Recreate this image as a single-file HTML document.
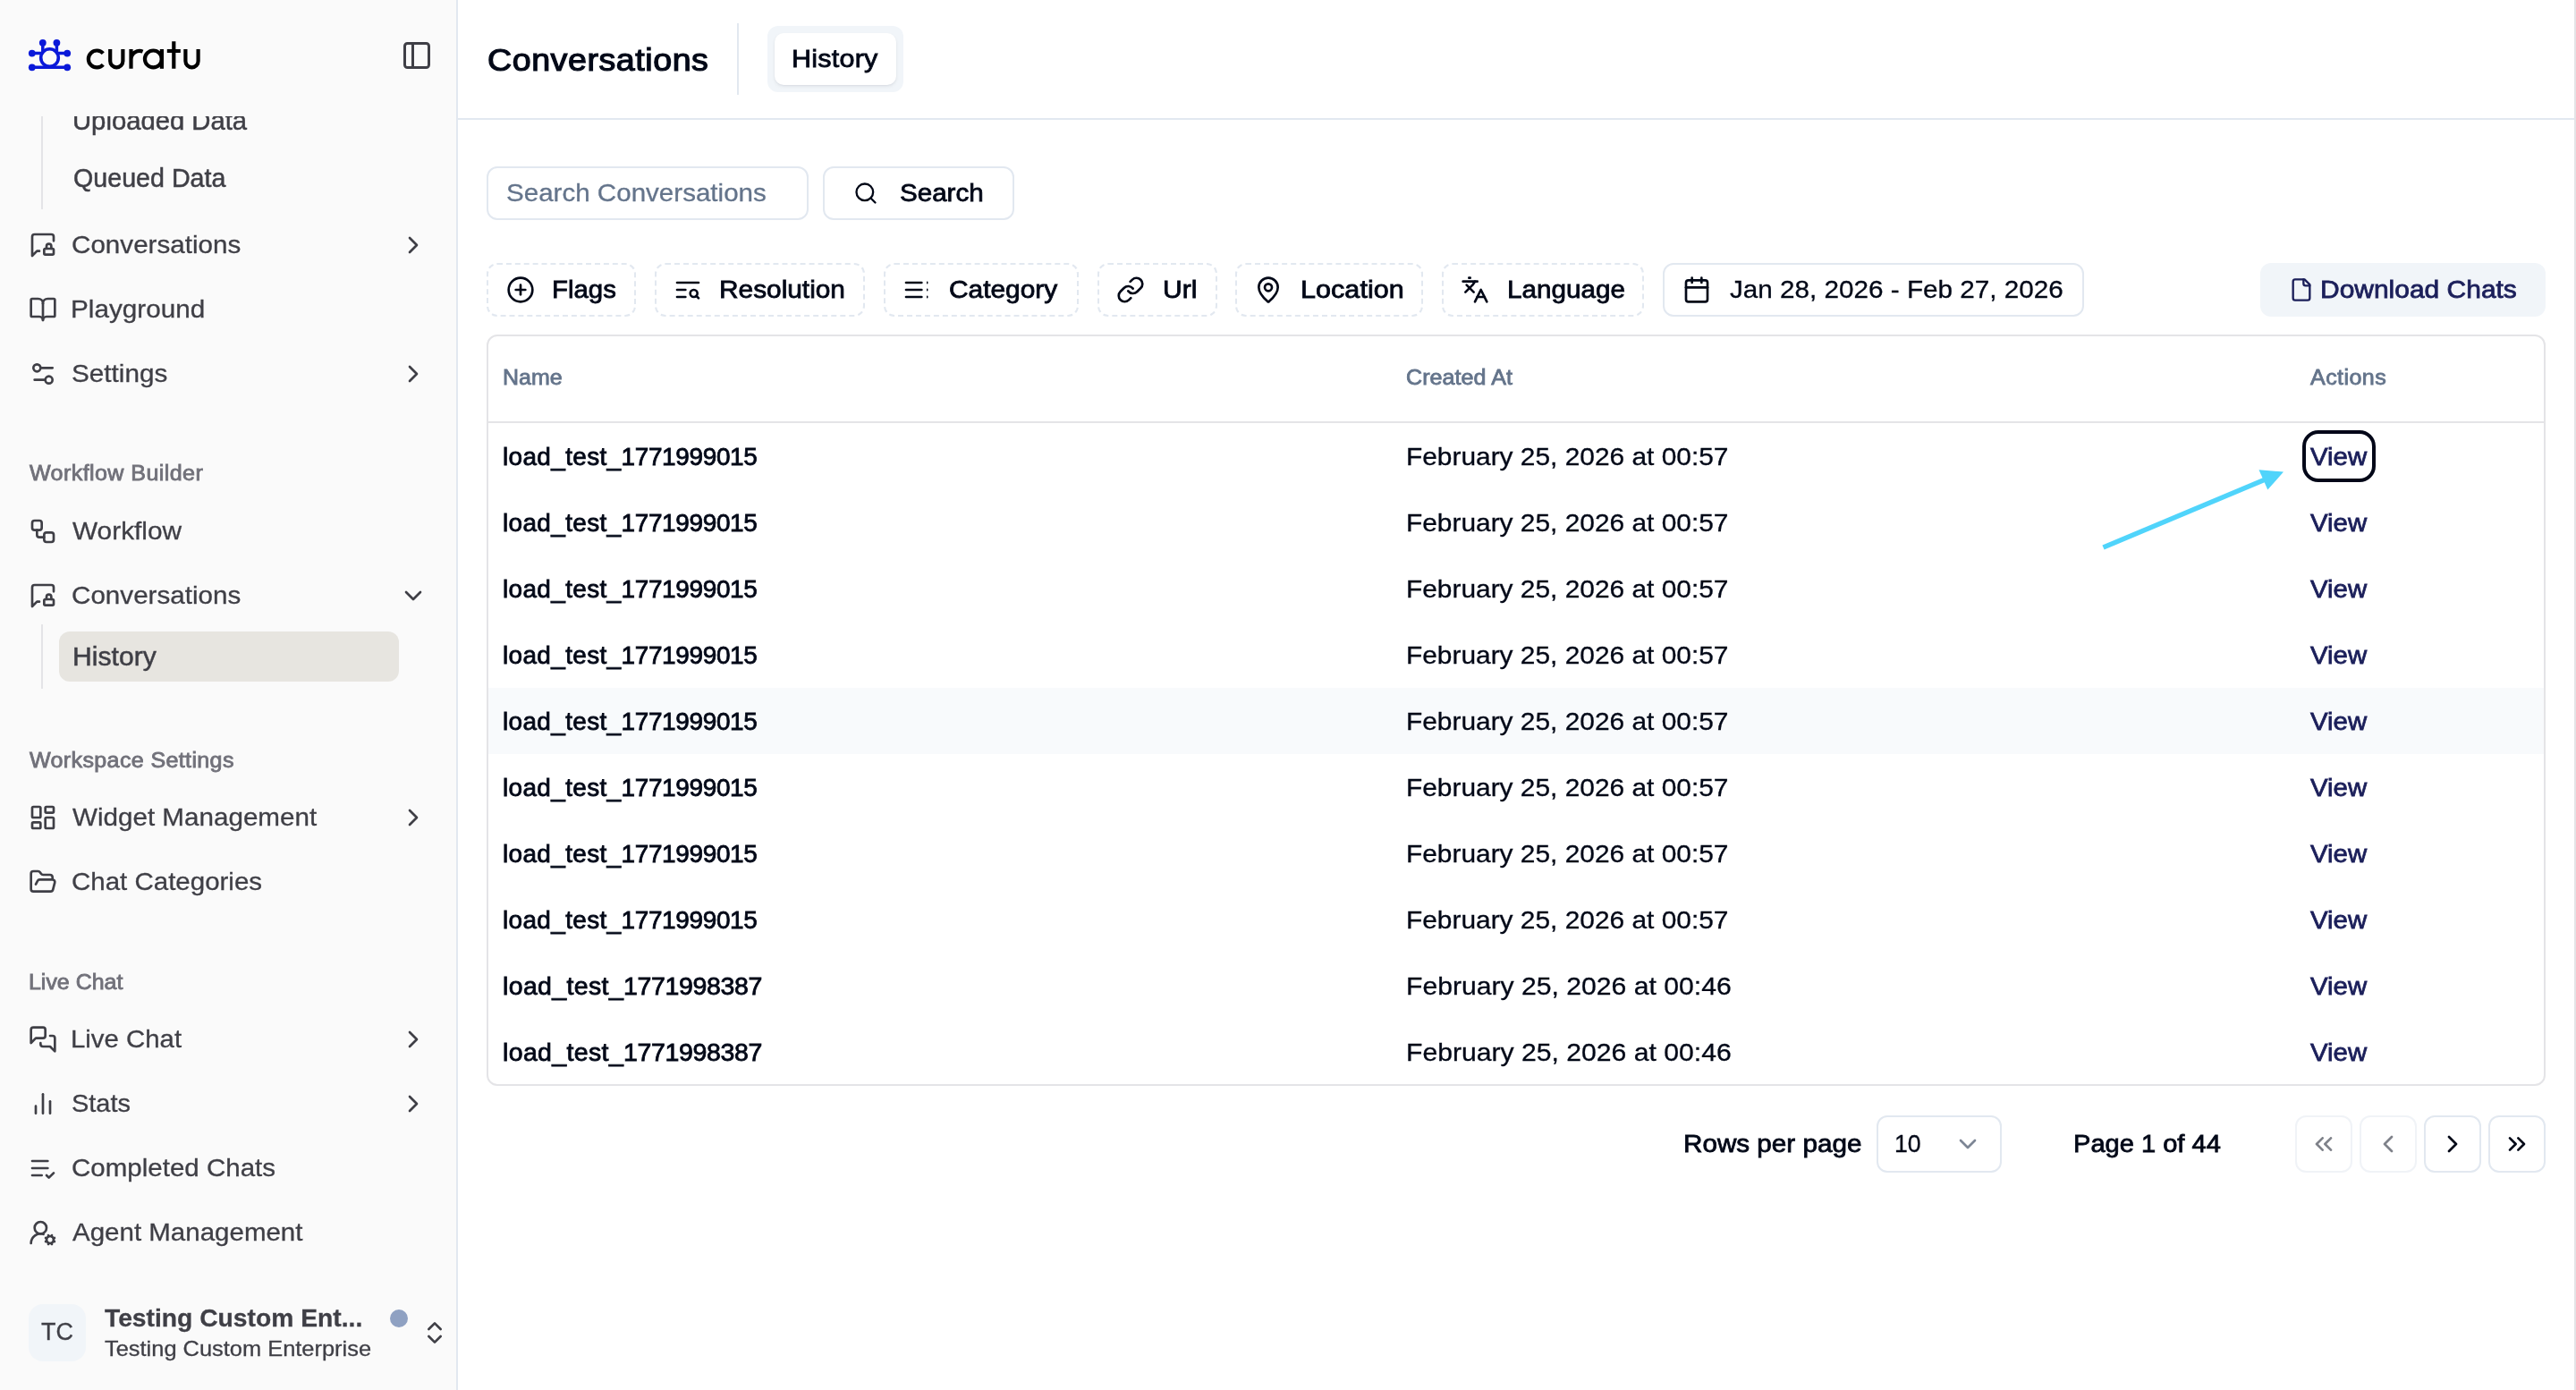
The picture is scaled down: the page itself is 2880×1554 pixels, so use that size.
<!DOCTYPE html>
<html lang="en">
<head>
<meta charset="utf-8">
<title>Conversations - History</title>
<style>
*{box-sizing:border-box;margin:0;padding:0}
html,body{width:2880px;height:1554px;overflow:hidden;background:#fff;font-family:"Liberation Sans",sans-serif;color:#020817}
body{position:relative}
.a{position:absolute}
svg.i{position:absolute;fill:none;stroke:currentColor;stroke-width:2;stroke-linecap:round;stroke-linejoin:round;overflow:visible}
.t{position:absolute;white-space:nowrap;transform-origin:0 50%;-webkit-text-stroke:.3px currentColor}
/* ---------- sidebar ---------- */
#sb{will-change:transform;position:absolute;left:0;top:0;width:512px;height:1554px;background:#fafafa;border-right:2px solid #e2e8f0;color:#3f3f46}
#sb .it{font-size:28px;line-height:64px;height:64px;left:80px}
#sb .sub{-webkit-text-stroke:.5px currentColor;font-size:29px;line-height:56px;height:56px;left:82px}
#sb .lbl{font-size:23px;line-height:64px;height:64px;left:32px;color:#71717a;-webkit-text-stroke:.8px currentColor}
#sb svg.i{width:32px;height:32px;left:32px}
#sb svg.ch{left:446px}
.vline{position:absolute;left:46px;width:2px;background:#e4e4e7}
/* ---------- main ---------- */
#main{will-change:transform;position:absolute;left:512px;top:0;width:2368px;height:1554px;background:#fff}

.md{-webkit-text-stroke:.8px currentColor}
.bx{border:2px solid #e2e8f0;background:#fff}
.bd{border:2px dashed #e2e8f0;border-radius:12px;background:#fff}
#main svg.f{width:32px;height:32px;top:308px}
.fl{top:292px;height:64px;line-height:64px;font-size:28px}
.th{top:390px;height:64px;line-height:64px;font-size:23px;color:#64748b}
.td{height:64px;line-height:64px;font-size:28px}
.vw{color:#1b1f5a}
.pb{top:1247px;width:64px;height:64px;border-radius:12px}
#main svg.pi{top:1263px;width:32px;height:32px}
</style>
</head>
<body>
<!-- ================= SIDEBAR ================= -->
<div id="sb">
  <!-- logo -->
  <svg class="a" style="left:0;top:0" width="260" height="110" viewBox="0 0 260 110">
    <g fill="#0a19d9" stroke="#0a19d9" stroke-width="3.5" stroke-linecap="butt">
      <circle cx="47.8" cy="47.8" r="3.9" stroke="none"/>
      <circle cx="63.4" cy="47.8" r="3.9" stroke="none"/>
      <circle cx="35.8" cy="59.6" r="3.9" stroke="none"/>
      <circle cx="75.2" cy="59.6" r="3.9" stroke="none"/>
      <circle cx="35.8" cy="75.3" r="3.9" stroke="none"/>
      <circle cx="75.2" cy="75.3" r="3.9" stroke="none"/>
      <circle cx="55.5" cy="64.6" r="9.8" fill="none" stroke-width="3.6"/>
      <path d="M47.8 47.8V59M63.4 47.8V59M35.8 59.6H47.5M63.6 59.6H75.2M35.8 75.3H75.2" fill="none"/>
    </g>
    <g fill="none" stroke="#000" stroke-width="4.2" stroke-linecap="butt" stroke-linejoin="round">
      <!-- c -->
      <path d="M115.3 59.6A9.45 9.45 0 1 0 115.3 72.3"/>
      <!-- u -->
      <path d="M123.2 55V68.2A7.1 7.1 0 0 0 137.4 68.2V55"/>
      <!-- r -->
      <path d="M146.5 55V76.8M146.5 66.5A9.6 9.6 0 0 1 159.6 57.6"/>
      <!-- a -->
      <circle cx="171.4" cy="65.95" r="9.45"/>
      <path d="M180.9 55V76.8"/>
      <!-- t -->
      <path d="M194.3 46.3V76.8M186.8 57H201.8"/>
      <!-- u -->
      <path d="M207.4 55V68.2A7.1 7.1 0 0 0 221.6 68.2V55"/>
    </g>
  </svg>
  <!-- panel toggle -->
  <svg class="i" style="left:448px;top:44px;width:36px;height:36px;color:#3f3f46" viewBox="0 0 24 24"><rect width="18" height="18" x="3" y="3" rx="2"/><path d="M9 3v18"/></svg>

  <!-- clipped scroll area -->
  <div class="a" style="left:0;top:130px;width:510px;height:1300px;overflow:hidden">
    <div class="a" style="left:0;top:-130px;width:510px;height:1554px">
      <div class="vline" style="top:100px;height:134px"></div>
      <span class="t sub" id="s_up" style="left:81.19px;margin-top:1px;top:106px;letter-spacing:-0.000px;transform:scaleX(1.0086)">Uploaded Data</span>
      <span class="t sub" id="s_qd" style="left:82.13px;margin-top:1px;top:170px;letter-spacing:0.000px;transform:scaleX(0.9877)">Queued Data</span>

      <svg class="i" style="top:258px" viewBox="0 0 24 24"><path d="M19 15v-2a2 2 0 1 0-4 0v2"/><path d="M9 17H7l-4 4V5a2 2 0 0 1 2-2h14a2 2 0 0 1 2 2v3.5"/><rect x="13" y="15" width="8" height="5" rx="1"/></svg>
      <span class="t it" id="s_c1" style="left:80.01px;top:242px;letter-spacing:0.000px;transform:scaleX(1.0577)">Conversations</span>
      <svg class="i ch" style="top:258px" viewBox="0 0 24 24"><path d="m9 18 6-6-6-6"/></svg>

      <svg class="i" style="top:330px" viewBox="0 0 24 24"><path d="M12 7v14"/><path d="M3 18a1 1 0 0 1-1-1V4a1 1 0 0 1 1-1h5a4 4 0 0 1 4 4 4 4 0 0 1 4-4h5a1 1 0 0 1 1 1v13a1 1 0 0 1-1 1h-6a3 3 0 0 0-3 3 3 3 0 0 0-3-3z"/></svg>
      <span class="t it" id="s_pg" style="left:79.02px;top:314px;letter-spacing:0.000px;transform:scaleX(1.0605)">Playground</span>

      <svg class="i" style="top:402px" viewBox="0 0 24 24"><path d="M20 7h-9"/><path d="M14 17H5"/><circle cx="17" cy="17" r="3"/><circle cx="7" cy="7" r="3"/></svg>
      <span class="t it" id="s_st" style="left:80.00px;top:386px;letter-spacing:0.000px;transform:scaleX(1.0606)">Settings</span>
      <svg class="i ch" style="top:402px" viewBox="0 0 24 24"><path d="m9 18 6-6-6-6"/></svg>

      <span class="t lbl" id="l_wb" style="left:33.00px;top:497px;letter-spacing:0.375px;transform:scaleX(1.0900)">Workflow Builder</span>

      <svg class="i" style="top:578px" viewBox="0 0 24 24"><rect width="8" height="8" x="3" y="3" rx="2"/><path d="M7 11v4a2 2 0 0 0 2 2h4"/><rect width="8" height="8" x="13" y="13" rx="2"/></svg>
      <span class="t it" id="s_wf" style="left:81.00px;top:562px;letter-spacing:0.000px;transform:scaleX(1.0653)">Workflow</span>

      <svg class="i" style="top:650px" viewBox="0 0 24 24"><path d="M19 15v-2a2 2 0 1 0-4 0v2"/><path d="M9 17H7l-4 4V5a2 2 0 0 1 2-2h14a2 2 0 0 1 2 2v3.5"/><rect x="13" y="15" width="8" height="5" rx="1"/></svg>
      <span class="t it" id="s_c2" style="left:80.01px;top:634px;letter-spacing:0.000px;transform:scaleX(1.0577)">Conversations</span>
      <svg class="i ch" style="top:650px" viewBox="0 0 24 24"><path d="m6 9 6 6 6-6"/></svg>

      <div class="vline" style="top:698px;height:72px"></div>
      <div class="a" style="left:66px;top:706px;width:380px;height:56px;border-radius:12px;background:#e7e5e0"></div>
      <span class="t sub" id="s_hi" style="left:81.20px;top:706px;letter-spacing:0.000px;transform:scaleX(1.0395)">History</span>

      <span class="t lbl" id="l_ws" style="left:33.00px;top:818px;letter-spacing:0.321px;transform:scaleX(1.0900)">Workspace Settings</span>

      <svg class="i" style="top:898px" viewBox="0 0 24 24"><rect width="7" height="9" x="3" y="3" rx="1"/><rect width="7" height="5" x="14" y="3" rx="1"/><rect width="7" height="9" x="14" y="12" rx="1"/><rect width="7" height="5" x="3" y="16" rx="1"/></svg>
      <span class="t it" id="s_wm" style="left:81.00px;top:882px;letter-spacing:0.000px;transform:scaleX(1.0574)">Widget Management</span>
      <svg class="i ch" style="top:898px" viewBox="0 0 24 24"><path d="m9 18 6-6-6-6"/></svg>

      <svg class="i" style="top:970px" viewBox="0 0 24 24"><path d="m6 14 1.5-2.9A2 2 0 0 1 9.24 10H20a2 2 0 0 1 1.94 2.5l-1.54 6a2 2 0 0 1-1.95 1.5H4a2 2 0 0 1-2-2V5a2 2 0 0 1 2-2h3.9a2 2 0 0 1 1.69.9l.81 1.2a2 2 0 0 0 1.67.9H18a2 2 0 0 1 2 2v2"/></svg>
      <span class="t it" id="s_cc" style="left:80.00px;top:954px;letter-spacing:-0.000px;transform:scaleX(1.0529)">Chat Categories</span>

      <span class="t lbl" id="l_lc" style="left:32.01px;top:1066px;letter-spacing:0.000px;transform:scaleX(1.0838)">Live Chat</span>

      <svg class="i" style="top:1146px" viewBox="0 0 24 24"><path d="M14 9a2 2 0 0 1-2 2H6l-4 4V4a2 2 0 0 1 2-2h8a2 2 0 0 1 2 2z"/><path d="M18 9h2a2 2 0 0 1 2 2v11l-4-4h-6a2 2 0 0 1-2-2v-1"/></svg>
      <span class="t it" id="s_lc" style="left:79.01px;top:1130px;letter-spacing:0.000px;transform:scaleX(1.0487)">Live Chat</span>
      <svg class="i ch" style="top:1146px" viewBox="0 0 24 24"><path d="m9 18 6-6-6-6"/></svg>

      <svg class="i" style="top:1218px" viewBox="0 0 24 24"><path d="M18 20V10"/><path d="M12 20V4"/><path d="M6 20v-6"/></svg>
      <span class="t it" id="s_sa" style="left:80.01px;top:1202px;letter-spacing:0.000px;transform:scaleX(1.0345)">Stats</span>
      <svg class="i ch" style="top:1218px" viewBox="0 0 24 24"><path d="m9 18 6-6-6-6"/></svg>

      <svg class="i" style="top:1290px" viewBox="0 0 24 24"><path d="M11 18H3"/><path d="m15 18 2 2 4-4"/><path d="M16 12H3"/><path d="M16 6H3"/></svg>
      <span class="t it" id="s_co" style="left:80.01px;top:1274px;letter-spacing:-0.000px;transform:scaleX(1.0541)">Completed Chats</span>

      <svg class="i" style="top:1362px" viewBox="0 0 24 24"><path d="M2 21a8 8 0 0 1 10.434-7.62"/><circle cx="10" cy="8" r="5"/><circle cx="18" cy="18" r="3"/><path d="m19.5 14.3-.4.9"/><path d="m16.9 20.8-.4.9"/><path d="m21.7 19.5-.9-.4"/><path d="m15.2 16.9-.9-.4"/><path d="m21.7 16.5-.9.4"/><path d="m15.2 19.1-.9.4"/><path d="m19.5 21.7-.4-.9"/><path d="m16.9 15.2-.4-.9"/></svg>
      <span class="t it" id="s_am" style="left:81.00px;top:1346px;letter-spacing:0.000px;transform:scaleX(1.0535)">Agent Management</span>
    </div>
  </div>

  <!-- footer / org switcher -->
  <div class="a" style="left:32px;top:1458px;width:64px;height:64px;border-radius:16px;background:#f1f5f9"></div>
  <span class="t" id="f_tc" style="left:46.01px;top:1456.5px;height:64px;line-height:64px;font-size:27px;color:#3f3f46;letter-spacing:0.000px;transform:scaleX(0.9988)">TC</span>
  <span class="t" id="f_n1" style="left:117.01px;top:1456px;height:36px;line-height:36px;font-size:28px;font-weight:700;color:#3f3f46;letter-spacing:0.000px;transform:scaleX(1.0089)">Testing Custom Ent...</span>
  <span class="t" id="f_n2" style="left:117.00px;margin-top:1px;top:1491px;height:32px;line-height:32px;font-size:24px;color:#3f3f46;letter-spacing:0.000px;transform:scaleX(1.0590)">Testing Custom Enterprise</span>
  <div class="a" style="left:436px;top:1464px;width:20px;height:20px;border-radius:50%;background:#8fa1c2"></div>
  <svg class="i" style="left:470px;top:1474px;color:#3f3f46" viewBox="0 0 24 24"><path d="m7 15 5 5 5-5"/><path d="m7 9 5-5 5 5"/></svg>
</div>

<!-- ================= MAIN ================= -->
<div id="main">
  <!-- right edge strip -->
  <div class="a" style="left:2366px;top:0;width:2px;height:1554px;background:#e4e4e7"></div>
  <!-- header -->
  <div class="a" style="left:0;top:132px;width:2366px;height:2px;background:#e2e8f0"></div>
  <span class="t md" id="m_title" style="left:33.02px;top:35px;height:64px;line-height:64px;font-size:34.5px;-webkit-text-stroke:1.2px currentColor;letter-spacing:0.498px;transform:scaleX(1.0900)">Conversations</span>
  <div class="a" style="left:312px;top:26px;width:2px;height:80px;background:#e2e8f0"></div>
  <div class="a" style="left:346px;top:29px;width:152px;height:74px;border-radius:12px;background:#f1f5f9"></div>
  <div class="a" style="left:354px;top:37px;width:136px;height:58px;border-radius:10px;background:#fff;box-shadow:0 2px 4px rgba(15,23,42,.06),0 1px 2px rgba(15,23,42,.05)"></div>
  <span class="t md" id="m_tab" style="left:373.01px;top:34px;height:64px;line-height:64px;font-size:28px;letter-spacing:0.206px;transform:scaleX(1.0900)">History</span>

  <!-- search row -->
  <div class="a bx" style="left:32px;top:186px;width:360px;height:60px;border-radius:12px"></div>
  <span class="t" id="m_ph" style="left:54.01px;top:184px;height:64px;line-height:64px;font-size:28px;color:#64748b;letter-spacing:0.000px;transform:scaleX(1.0556)">Search Conversations</span>
  <div class="a bx" style="left:408px;top:186px;width:214px;height:60px;border-radius:12px"></div>
  <svg class="i" style="left:442px;top:202px;width:28px;height:28px" viewBox="0 0 24 24"><circle cx="11" cy="11" r="8"/><path d="m21 21-4.3-4.3"/></svg>
  <span class="t md" id="m_sb" style="left:494.01px;top:184px;height:64px;line-height:64px;font-size:28px;letter-spacing:-0.000px;transform:scaleX(1.0553)">Search</span>

  <!-- filter row -->
  <div class="a bd" style="left:32px;top:294px;width:166.5px;height:60px"></div>
  <svg class="i f" style="left:54px" viewBox="0 0 24 24"><circle cx="12" cy="12" r="10"/><path d="M8 12h8"/><path d="M12 8v8"/></svg>
  <span class="t md fl" id="f_fl" style="left:105.01px;;letter-spacing:0.000px;transform:scaleX(1.0488)">Flags</span>

  <div class="a bd" style="left:219.5px;top:294px;width:235px;height:60px"></div>
  <svg class="i f" style="left:241px" viewBox="0 0 24 24"><path d="M21 6H3"/><path d="M10 12H3"/><path d="M10 18H3"/><circle cx="17" cy="15" r="3"/><path d="m21 19-1.9-1.9"/></svg>
  <span class="t md fl" id="f_re" style="left:292.00px;;letter-spacing:0.000px;transform:scaleX(1.0654)">Resolution</span>

  <div class="a bd" style="left:475.5px;top:294px;width:218px;height:60px"></div>
  <svg class="i f" style="left:497px" viewBox="0 0 24 24"><path d="M3 6h13"/><path d="M3 12h13"/><path d="M3 18h13"/><path d="M20.8 5.4v1.2M20.8 11.4v1.2M20.8 17.4v1.2" stroke-width="1.1"/></svg>
  <span class="t md fl" id="f_ca" style="left:549.00px;;letter-spacing:-0.000px;transform:scaleX(1.0669)">Category</span>

  <div class="a bd" style="left:714.5px;top:294px;width:134px;height:60px"></div>
  <svg class="i f" style="left:736px" viewBox="0 0 24 24"><path d="M10 13a5 5 0 0 0 7.54.54l3-3a5 5 0 0 0-7.07-7.07l-1.72 1.71"/><path d="M14 11a5 5 0 0 0-7.54-.54l-3 3a5 5 0 0 0 7.07 7.07l1.71-1.71"/></svg>
  <span class="t md fl" id="f_ur" style="left:788.02px;;letter-spacing:0.000px;transform:scaleX(1.0721)">Url</span>

  <div class="a bd" style="left:868.5px;top:294px;width:210px;height:60px"></div>
  <svg class="i f" style="left:890px" viewBox="0 0 24 24"><path d="M20 10c0 4.993-5.539 10.193-7.399 11.799a1 1 0 0 1-1.202 0C9.539 20.193 4 14.993 4 10a8 8 0 0 1 16 0"/><circle cx="12" cy="10" r="3"/></svg>
  <span class="t md fl" id="f_lo" style="left:942.01px;;letter-spacing:0.050px;transform:scaleX(1.0900)">Location</span>

  <div class="a bd" style="left:1099.5px;top:294px;width:226.5px;height:60px"></div>
  <svg class="i f" style="left:1121px" viewBox="0 0 24 24"><path d="m5 8 6 6"/><path d="m4 14 6-6 2-3"/><path d="M2 5h12"/><path d="M7 2h1"/><path d="m22 22-5-10-5 10"/><path d="M14 18h6"/></svg>
  <span class="t md fl" id="f_la" style="left:1173.01px;;letter-spacing:0.000px;transform:scaleX(1.0586)">Language</span>

  <div class="a bx" style="left:1347px;top:294px;width:471px;height:60px;border-radius:12px"></div>
  <svg class="i f" style="left:1369px" viewBox="0 0 24 24"><path d="M8 2v4"/><path d="M16 2v4"/><rect width="18" height="18" x="3" y="4" rx="2"/><path d="M3 10h18"/></svg>
  <span class="t fl" id="f_da" style="left:1422.00px;;letter-spacing:0.000px;transform:scaleX(1.0596)">Jan 28, 2026 - Feb 27, 2026</span>

  <div class="a" style="left:2015px;top:294px;width:319px;height:60px;border-radius:12px;background:#f1f5f9"></div>
  <svg class="i" style="left:2047px;top:310px;width:28px;height:28px;color:#1b1f5a" viewBox="0 0 24 24"><path d="M15 2H6a2 2 0 0 0-2 2v16a2 2 0 0 0 2 2h12a2 2 0 0 0 2-2V7Z"/><path d="M14 2v4a2 2 0 0 0 2 2h4"/></svg>
  <span class="t md fl" id="f_dl" style="left:2082.01px;color:#1b1f5a;letter-spacing:0.000px;transform:scaleX(1.0701)">Download Chats</span>

  <!-- table -->
  <div class="a" style="left:32px;top:374px;width:2302px;height:840px;border:2px solid #e4e4e7;border-radius:12px;overflow:hidden">
    <div class="a" style="left:0;top:95px;width:2298px;height:2px;background:#e4e4e7"></div>
    <div class="a" style="left:0;top:393px;width:2298px;height:74px;background:#f8fafc"></div>
  </div>
  <span class="t md th" id="h_na" style="left:50.01px;;letter-spacing:-0.000px;transform:scaleX(1.0851)">Name</span>
  <span class="t md th" id="h_cr" style="left:1060.00px;;letter-spacing:0.047px;transform:scaleX(1.0900)">Created At</span>
  <span class="t md th" id="h_ac" style="left:2071.00px;;letter-spacing:0.376px;transform:scaleX(1.0900)">Actions</span>
  <span class="t md td" id="r0n" style="left:50.01px;top:479px;letter-spacing:0.000px;transform:scaleX(0.9985)"><span style="letter-spacing:.35px">load_test_</span><span style="letter-spacing:-.35px">1771999015</span></span>
  <span class="t td" id="r0d" style="left:1060.01px;top:479px;letter-spacing:0.000px;transform:scaleX(1.0670)">February 25, 2026 at 00:57</span>
  <span class="t md td vw" id="r0v" style="left:2071.01px;top:479px;letter-spacing:0.000px;transform:scaleX(1.0492)">View</span>
  <span class="t md td" id="r1n" style="left:50.01px;top:553px;letter-spacing:0.000px;transform:scaleX(0.9985)"><span style="letter-spacing:.35px">load_test_</span><span style="letter-spacing:-.35px">1771999015</span></span>
  <span class="t td" id="r1d" style="left:1060.01px;top:553px;letter-spacing:0.000px;transform:scaleX(1.0670)">February 25, 2026 at 00:57</span>
  <span class="t md td vw" id="r1v" style="left:2071.01px;top:553px;letter-spacing:0.000px;transform:scaleX(1.0492)">View</span>
  <span class="t md td" id="r2n" style="left:50.01px;top:627px;letter-spacing:0.000px;transform:scaleX(0.9985)"><span style="letter-spacing:.35px">load_test_</span><span style="letter-spacing:-.35px">1771999015</span></span>
  <span class="t td" id="r2d" style="left:1060.01px;top:627px;letter-spacing:0.000px;transform:scaleX(1.0670)">February 25, 2026 at 00:57</span>
  <span class="t md td vw" id="r2v" style="left:2071.01px;top:627px;letter-spacing:0.000px;transform:scaleX(1.0492)">View</span>
  <span class="t md td" id="r3n" style="left:50.01px;top:701px;letter-spacing:0.000px;transform:scaleX(0.9985)"><span style="letter-spacing:.35px">load_test_</span><span style="letter-spacing:-.35px">1771999015</span></span>
  <span class="t td" id="r3d" style="left:1060.01px;top:701px;letter-spacing:0.000px;transform:scaleX(1.0670)">February 25, 2026 at 00:57</span>
  <span class="t md td vw" id="r3v" style="left:2071.01px;top:701px;letter-spacing:0.000px;transform:scaleX(1.0492)">View</span>
  <span class="t md td" id="r4n" style="left:50.01px;top:775px;letter-spacing:0.000px;transform:scaleX(0.9985)"><span style="letter-spacing:.35px">load_test_</span><span style="letter-spacing:-.35px">1771999015</span></span>
  <span class="t td" id="r4d" style="left:1060.01px;top:775px;letter-spacing:0.000px;transform:scaleX(1.0670)">February 25, 2026 at 00:57</span>
  <span class="t md td vw" id="r4v" style="left:2071.01px;top:775px;letter-spacing:0.000px;transform:scaleX(1.0492)">View</span>
  <span class="t md td" id="r5n" style="left:50.01px;top:849px;letter-spacing:0.000px;transform:scaleX(0.9985)"><span style="letter-spacing:.35px">load_test_</span><span style="letter-spacing:-.35px">1771999015</span></span>
  <span class="t td" id="r5d" style="left:1060.01px;top:849px;letter-spacing:0.000px;transform:scaleX(1.0670)">February 25, 2026 at 00:57</span>
  <span class="t md td vw" id="r5v" style="left:2071.01px;top:849px;letter-spacing:0.000px;transform:scaleX(1.0492)">View</span>
  <span class="t md td" id="r6n" style="left:50.01px;top:923px;letter-spacing:0.000px;transform:scaleX(0.9985)"><span style="letter-spacing:.35px">load_test_</span><span style="letter-spacing:-.35px">1771999015</span></span>
  <span class="t td" id="r6d" style="left:1060.01px;top:923px;letter-spacing:0.000px;transform:scaleX(1.0670)">February 25, 2026 at 00:57</span>
  <span class="t md td vw" id="r6v" style="left:2071.01px;top:923px;letter-spacing:0.000px;transform:scaleX(1.0492)">View</span>
  <span class="t md td" id="r7n" style="left:50.01px;top:997px;letter-spacing:0.000px;transform:scaleX(0.9985)"><span style="letter-spacing:.35px">load_test_</span><span style="letter-spacing:-.35px">1771999015</span></span>
  <span class="t td" id="r7d" style="left:1060.01px;top:997px;letter-spacing:0.000px;transform:scaleX(1.0670)">February 25, 2026 at 00:57</span>
  <span class="t md td vw" id="r7v" style="left:2071.01px;top:997px;letter-spacing:0.000px;transform:scaleX(1.0492)">View</span>
  <span class="t md td" id="r8n" style="left:50.01px;top:1071px;letter-spacing:0.000px;transform:scaleX(1.0179)"><span style="letter-spacing:.35px">load_test_</span><span style="letter-spacing:-.35px">1771998387</span></span>
  <span class="t td" id="r8d" style="left:1060.02px;top:1071px;letter-spacing:0.000px;transform:scaleX(1.0767)">February 25, 2026 at 00:46</span>
  <span class="t md td vw" id="r8v" style="left:2071.01px;top:1071px;letter-spacing:0.000px;transform:scaleX(1.0492)">View</span>
  <span class="t md td" id="r9n" style="left:50.01px;top:1145px;letter-spacing:0.000px;transform:scaleX(1.0179)"><span style="letter-spacing:.35px">load_test_</span><span style="letter-spacing:-.35px">1771998387</span></span>
  <span class="t td" id="r9d" style="left:1060.02px;top:1145px;letter-spacing:0.000px;transform:scaleX(1.0767)">February 25, 2026 at 00:46</span>
  <span class="t md td vw" id="r9v" style="left:2071.01px;top:1145px;letter-spacing:0.000px;transform:scaleX(1.0492)">View</span>

  <!-- focused view ring -->
  <div class="a" style="left:2062px;top:481px;width:82px;height:58px;border:4px solid #030718;border-radius:18px"></div>

  <!-- annotation arrow -->
  <svg class="a" style="left:0;top:0;overflow:visible" width="2368" height="1554" viewBox="512 0 2368 1554">
    <path d="M2351.5 612L2532 536.3" stroke="#50d4fb" stroke-width="5.5" fill="none"/>
    <path d="M2553 527.5L2525.5 525.3L2535.3 547.6Z" fill="#50d4fb"/>
  </svg>

  <!-- pagination -->
  <span class="t md" id="p_rp" style="left:1370.01px;top:1247px;height:64px;line-height:64px;font-size:28px;letter-spacing:0.000px;transform:scaleX(1.0587)">Rows per page</span>
  <div class="a bx" style="left:1586px;top:1247px;width:140px;height:64px;border-radius:12px"></div>
  <span class="t" id="p_10" style="left:1606.00px;top:1247px;height:64px;line-height:64px;font-size:28px;letter-spacing:0.000px;transform:scaleX(0.9525)">10</span>
  <svg class="i" style="left:1672px;top:1263px;width:32px;height:32px;color:#7d8695" viewBox="0 0 24 24"><path d="m6 9 6 6 6-6"/></svg>
  <span class="t md" id="p_pg" style="left:1806.01px;top:1247px;height:64px;line-height:64px;font-size:28px;letter-spacing:0.000px;transform:scaleX(1.0380)">Page 1 of 44</span>

  <div class="a bx pb" style="left:2054px;opacity:.5"></div>
  <svg class="i pi" style="left:2070px;opacity:.5" viewBox="0 0 24 24"><path d="m11 17-5-5 5-5"/><path d="m18 17-5-5 5-5"/></svg>
  <div class="a bx pb" style="left:2126px;opacity:.5"></div>
  <svg class="i pi" style="left:2142px;opacity:.5" viewBox="0 0 24 24"><path d="m15 18-6-6 6-6"/></svg>
  <div class="a bx pb" style="left:2198px"></div>
  <svg class="i pi" style="left:2214px" viewBox="0 0 24 24"><path d="m9 18 6-6-6-6"/></svg>
  <div class="a bx pb" style="left:2270px"></div>
  <svg class="i pi" style="left:2286px" viewBox="0 0 24 24"><path d="m6 17 5-5-5-5"/><path d="m13 17 5-5-5-5"/></svg>

</div>
</body>
</html>
